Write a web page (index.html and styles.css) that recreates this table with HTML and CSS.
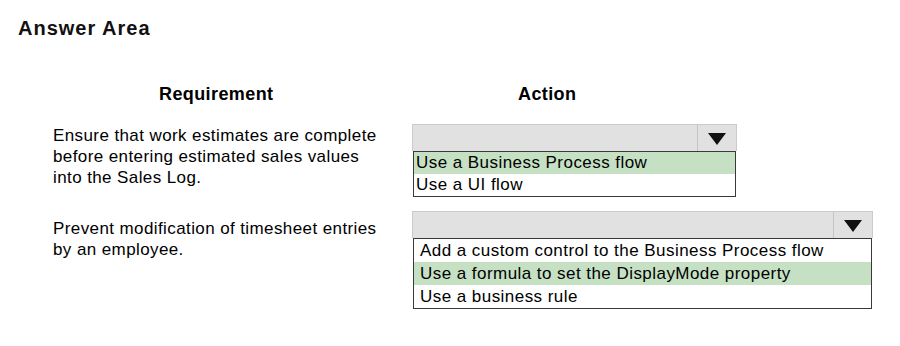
FILE: index.html
```html
<!DOCTYPE html>
<html lang="en">
<head>
<meta charset="utf-8">
<title>Answer Area</title>
<link rel="stylesheet" href="styles.css">
</head>
<body>
<div class="page">
  <h1 class="title">Answer Area</h1>
  <div class="table">
    <div class="head">Requirement</div>
    <div class="head">Action</div>

    <div class="req req-1">Ensure that work estimates are complete<br>before entering estimated sales values<br>into the Sales Log.</div>
    <div class="dropdown dd-1">
      <div class="bar"><div class="arrow-cell"><span class="arrow"></span></div></div>
      <ul class="list list-1">
        <li class="opt sel">Use a Business Process flow</li>
        <li class="opt">Use a UI flow</li>
      </ul>
    </div>

    <div class="req req-2">Prevent modification of timesheet entries<br>by an employee.</div>
    <div class="dropdown dd-2">
      <div class="bar"><div class="arrow-cell"><span class="arrow"></span></div></div>
      <ul class="list list-2">
        <li class="opt">Add a custom control to the Business Process flow</li>
        <li class="opt sel">Use a formula to set the DisplayMode property</li>
        <li class="opt">Use a business rule</li>
      </ul>
    </div>
  </div>
</div>
</body>
</html>
```

FILE: styles.css
```css
html, body {
  margin: 0;
  padding: 0;
  background: #ffffff;
}

body {
  font-family: "Liberation Sans", Arial, sans-serif;
  color: #000;
}

.page {
  width: 900px;
  height: 346px;
  overflow: hidden;
}

.title {
  margin: 16px 0 0 18px;
  font-size: 20px;
  line-height: 24px;
  font-weight: bold;
  letter-spacing: 1px;
  color: #111;
}

.table {
  display: grid;
  grid-template-columns: 359px 461px;
  align-items: start;
  padding-left: 53px;
  margin-top: 43px;
}

.head {
  font-size: 18px;
  line-height: 22px;
  font-weight: bold;
  letter-spacing: 0.4px;
  padding-left: 106px;
  margin-bottom: 19px;
}

.req {
  font-size: 17px;
  line-height: 21px;
  letter-spacing: 0.4px;
}

.req-1 {
  padding-top: 1px;
}

.req-2 {
  padding-top: 7px;
}

.dropdown {
  display: flex;
  flex-direction: column;
}

.dd-1 {
  width: 325px;
  margin-bottom: 14px;
}

.dd-2 {
  width: 461px;
}

.bar {
  height: 27px;
  box-sizing: border-box;
  background: #e1e1e1;
  border: 1px solid #cbcbcb;
  border-bottom: none;
  display: flex;
  justify-content: flex-end;
}

.arrow-cell {
  width: 38px;
  border-left: 1px solid #c4c4c4;
  display: flex;
  align-items: center;
  justify-content: center;
  padding-top: 2px;
}

.arrow {
  width: 0;
  height: 0;
  border-left: 9px solid transparent;
  border-right: 9px solid transparent;
  border-top: 12px solid #111;
}

.list {
  list-style: none;
  margin: 0 1px;
  padding: 0;
  border: 1px solid #3a3a3a;
  background: #fff;
}

.opt {
  font-size: 17px;
  letter-spacing: 0.45px;
  white-space: nowrap;
}

.list-1 .opt {
  line-height: 22px;
  padding-left: 2px;
}

.list-2 .opt {
  line-height: 23px;
  padding-left: 6px;
}

.opt.sel {
  background: #c6e0c4;
}
```
